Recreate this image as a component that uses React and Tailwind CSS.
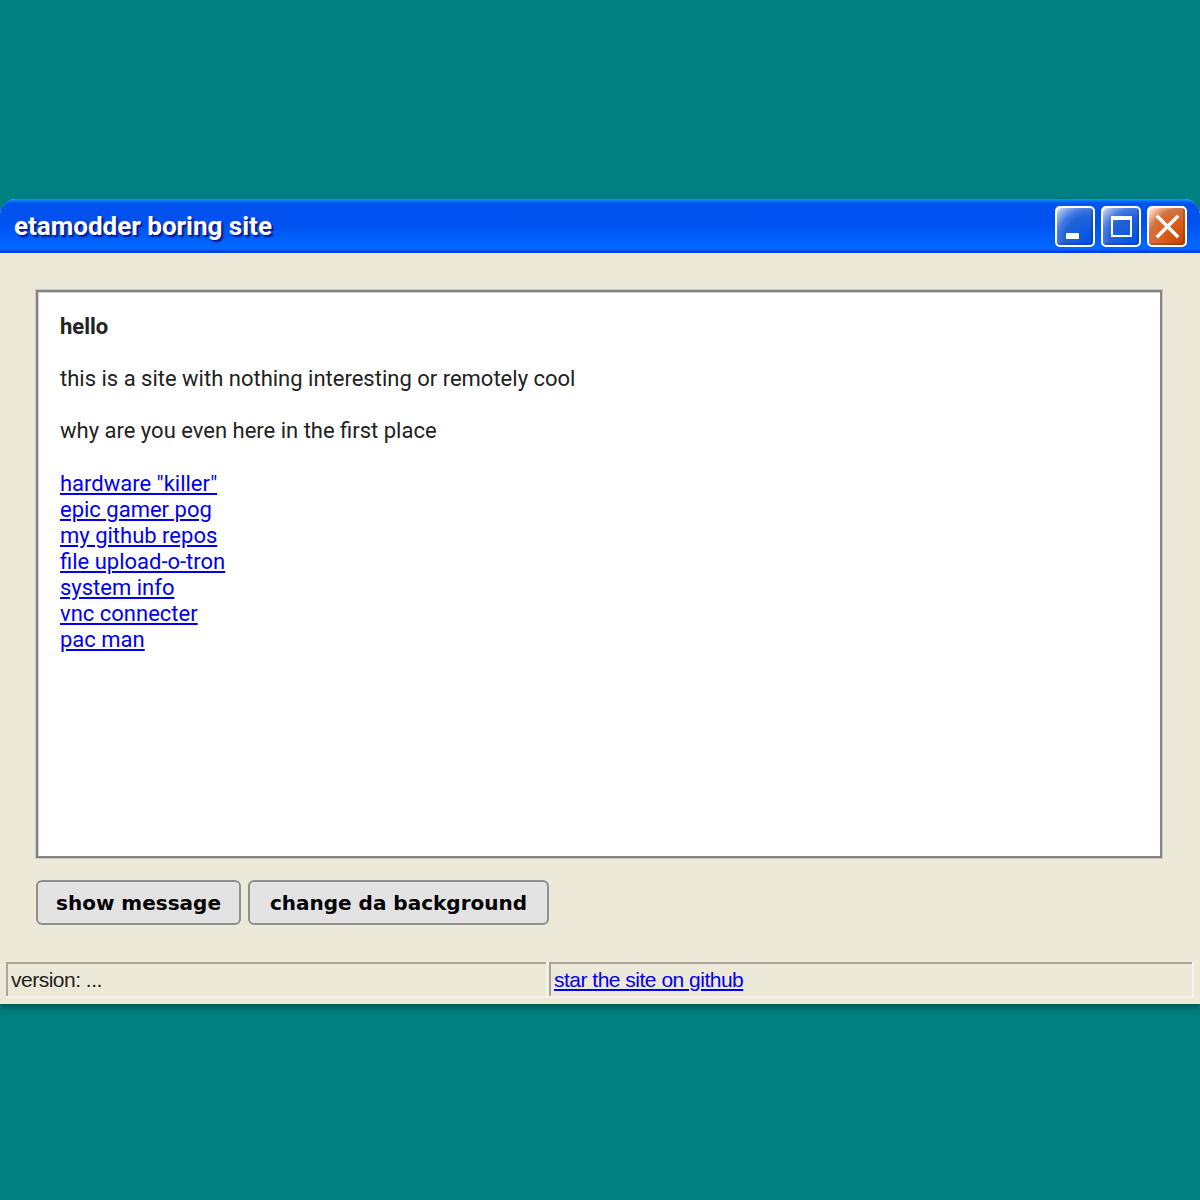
import React from 'react';

const links = [
  'hardware "killer"',
  'epic gamer pog',
  'my github repos',
  'file upload-o-tron',
  'system info',
  'vnc connecter',
  'pac man',
];

const TitleButton = ({ kind }) => {
  const bg =
    kind === 'close'
      ? 'bg-[radial-gradient(circle_at_90%_90%,#cc4600_0%,#dc6527_55%,#cd7546_70%,#ffccb2_90%,#fff_100%)]'
      : 'bg-[radial-gradient(circle_at_90%_90%,#0054e9_0%,#2263d5_55%,#4479e4_70%,#a3bbec_90%,#fff_100%)]';
  return (
    <button
      className={`relative w-[40px] h-[41px] rounded-[5px] border-2 border-white ${bg} shadow-[inset_-2px_-2px_#0000002a]`}
      aria-label={kind}
    >
      {kind === 'min' && (
        <span className="absolute left-[9px] top-[25px] w-[13px] h-[6px] bg-white" />
      )}
      {kind === 'max' && (
        <span className="absolute left-[8px] top-[8px] w-[21px] h-[21px] border-2 border-t-[4px] border-white" />
      )}
      {kind === 'close' && (
        <svg className="absolute left-[6px] top-[6px]" width="25" height="25" viewBox="0 0 25 25">
          <path d="M3 3 L22 22 M22 3 L3 22" stroke="white" strokeWidth="3.5" strokeLinecap="square" />
        </svg>
      )}
    </button>
  );
};

export default function App() {
  return (
    <div className="min-h-[1200px] bg-[#008080] pt-[199px]">
      <div className="bg-[#ece9d8] rounded-t-[16px] shadow-[0_4px_6px_rgba(0,0,0,0.35)]">
        {/* title bar */}
        <div className="h-[54px] rounded-t-[16px] bg-[linear-gradient(180deg,#0997ff,#0053ee_8%,#0050ee_40%,#06f_88%,#06f_93%,#005bff_95%,#003dd7_96%,#003dd7)] flex items-center justify-between pl-[14px] pr-[13px]">
          <span className="text-white text-[26px] font-bold font-['Roboto',sans-serif] [text-shadow:2px_2px_2px_#0f1089]">
            etamodder boring site
          </span>
          <div className="flex gap-[6px]">
            <TitleButton kind="min" />
            <TitleButton kind="max" />
            <TitleButton kind="close" />
          </div>
        </div>

        {/* body */}
        <div className="pt-[37px] pl-[36px] pr-[38px]">
          <div className="h-[568px] bg-white border-2 border-[#858585] shadow-[0_0_0_1px_#c8c8c8,inset_1px_1px_#d0d0d0] px-[22px] pt-[22px] font-['Roboto',sans-serif] text-[22px] leading-[26px] text-[#222]">
            <p className="font-bold">hello</p>
            <p className="mt-[26px]">this is a site with nothing interesting or remotely cool</p>
            <p className="mt-[26px]">why are you even here in the first place</p>
            <ul className="mt-[27px]">
              {links.map((l) => (
                <li key={l}>
                  <a href="#" className="text-[#0000ee] underline">
                    {l}
                  </a>
                </li>
              ))}
            </ul>
          </div>

          <div className="flex gap-[7px] mt-[22px]">
            <button className="w-[205px] h-[45px] rounded-[6px] border-2 border-[#8f8f8f] bg-[#e3e3e3] text-black font-bold text-[20px] font-['DejaVu_Sans',sans-serif]">
              show message
            </button>
            <button className="w-[301px] h-[45px] rounded-[6px] border-2 border-[#8f8f8f] bg-[#e3e3e3] text-black font-bold text-[20px] font-['DejaVu_Sans',sans-serif]">
              change da background
            </button>
          </div>
        </div>

        {/* status bar */}
        <div className="mt-[37px] mx-[6px] pb-[6px] flex gap-[1px] font-['Liberation_Sans',sans-serif] text-[21px] tracking-[-0.5px]">
          <div className="w-[542px] h-[36px] flex items-center px-[5px] shadow-[inset_-2px_-2px_#f4f3ee,inset_2px_2px_#a7a69b] text-[#222]">
            version: ...
          </div>
          <div className="flex-1 h-[36px] flex items-center px-[5px] shadow-[inset_-2px_-2px_#f4f3ee,inset_2px_2px_#a7a69b]">
            <a href="#" className="text-[#0000ee] underline">
              star the site on github
            </a>
          </div>
        </div>
      </div>
    </div>
  );
}
